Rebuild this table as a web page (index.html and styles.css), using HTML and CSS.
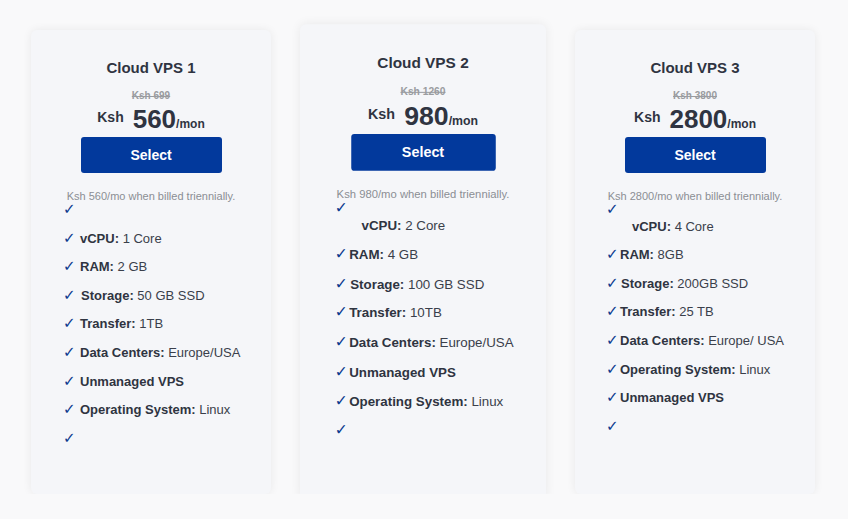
FILE: index.html
```html
<!DOCTYPE html>
<html lang="en">
<head>
    <meta charset="UTF-8">
    <meta name="viewport" content="width=device-width, initial-scale=1.0">
    <title>Cloud VPS Plans</title>
    <link rel="stylesheet" href="styles.css">
</head>
<body>

<div class="plans">
    <div class="card card-one">
        <h3>Cloud VPS 1</h3>
        <p class="old-price">Ksh 699</p>
        <p class="price"><span class="cur">Ksh</span><span class="amount">560</span><span class="per">/mon</span></p>
        <button class="select-btn">Select</button>
        <p class="note">Ksh 560/mo when billed triennially.</p>
        <ul class="features">
            <li><span class="check">✓</span></li>
            <li><span class="check">✓</span><b>vCPU:</b> 1 Core</li>
            <li><span class="check">✓</span><b>RAM:</b> 2 GB</li>
            <li><span class="check">✓</span><b class="nudge">Storage:</b> 50 GB SSD</li>
            <li><span class="check">✓</span><b>Transfer:</b> 1TB</li>
            <li><span class="check">✓</span><b>Data Centers:</b> Europe/USA</li>
            <li><span class="check">✓</span><b>Unmanaged VPS</b></li>
            <li><span class="check">✓</span><b>Operating System:</b> Linux</li>
            <li><span class="check">✓</span></li>
        </ul>
    </div>

    <div class="card card-two featured">
        <h3>Cloud VPS 2</h3>
        <p class="old-price">Ksh 1260</p>
        <p class="price"><span class="cur">Ksh</span><span class="amount">980</span><span class="per">/mon</span></p>
        <button class="select-btn">Select</button>
        <p class="note">Ksh 980/mo when billed triennially.</p>
        <ul class="features">
            <li><span class="check">✓</span><span class="sub"><b>vCPU:</b> 2 Core</span></li>
            <li><span class="check">✓</span><b>RAM:</b> 4 GB</li>
            <li><span class="check">✓</span><b class="nudge">Storage:</b> 100 GB SSD</li>
            <li><span class="check">✓</span><b>Transfer:</b> 10TB</li>
            <li><span class="check">✓</span><b>Data Centers:</b> Europe/USA</li>
            <li><span class="check">✓</span><b>Unmanaged VPS</b></li>
            <li><span class="check">✓</span><b>Operating System:</b> Linux</li>
            <li><span class="check">✓</span></li>
        </ul>
    </div>

    <div class="card card-three">
        <h3>Cloud VPS 3</h3>
        <p class="old-price">Ksh 3800</p>
        <p class="price"><span class="cur">Ksh</span><span class="amount">2800</span><span class="per">/mon</span></p>
        <button class="select-btn">Select</button>
        <p class="note">Ksh 2800/mo when billed triennially.</p>
        <ul class="features">
            <li><span class="check">✓</span><span class="sub"><b>vCPU:</b> 4 Core</span></li>
            <li><span class="check">✓</span><b>RAM:</b> 8GB</li>
            <li><span class="check">✓</span><b class="nudge">Storage:</b> 200GB SSD</li>
            <li><span class="check">✓</span><b>Transfer:</b> 25 TB</li>
            <li><span class="check">✓</span><b>Data Centers:</b> Europe/ USA</li>
            <li><span class="check">✓</span><b>Operating System:</b> Linux</li>
            <li><span class="check">✓</span><b>Unmanaged VPS</b></li>
            <li><span class="check">✓</span></li>
        </ul>
    </div>
</div>

</body>
</html>
```

FILE: styles.css
```css
body { font-family: "Liberation Sans", Arial, sans-serif; background-color: #f9f9fa; margin: 0; }
.plans { display: flex; justify-content: center; gap: 32px; padding: 30px 2px 0 0; }
.card { box-sizing: border-box; width: 240px; height: 464px; padding-top: 29px; background-color: #f5f6f9; border-radius: 6px; box-shadow: 0 0 10px rgba(0,0,0,0.07); text-align: center; }
.card.featured { transform: scale(1.025); }
h3 { margin: 0; font-size: 15px; line-height: 18px; color: #2f3441; }
.old-price { margin: 13px 0 0; font-size: 10px; line-height: 12px; font-weight: bold; color: #9a9ca0; text-decoration: line-through; }
.price { margin: 4px 0 0; line-height: 1; font-weight: bold; color: #2f3441; }
.price .cur { font-size: 14px; vertical-align: 6px; margin-right: 9px; }
.price .amount { font-size: 26px; }
.price .per { font-size: 12px; }
.select-btn { display: block; width: 141px; height: 36px; margin: 5px auto 0; padding: 0; background-color: #02399c; color: #fff; border: none; border-radius: 3px; font-family: inherit; font-size: 14px; font-weight: bold; cursor: pointer; }
.note { margin: 17px 0 0; font-size: 11px; line-height: 12px; color: #8b8e94; }
.features { list-style: none; margin: 0; padding: 0 0 0 31px; text-align: left; font-size: 13px; line-height: 16.6px; color: #3a3f4b; }
.features li { margin-bottom: 12px; }
.features b { color: #2f3441; }
.features .nudge { margin-left: 1px; }
.check { display: inline-block; width: 14px; line-height: 15px; color: #0c3a8e; font-family: "DejaVu Sans", sans-serif; font-size: 15px; }
.sub { display: block; padding-left: 26px; }
.card-one .features { padding-left: 32px; }
.card-one .check { width: 17px; }
.card-two .features { padding-left: 34px; }
```
